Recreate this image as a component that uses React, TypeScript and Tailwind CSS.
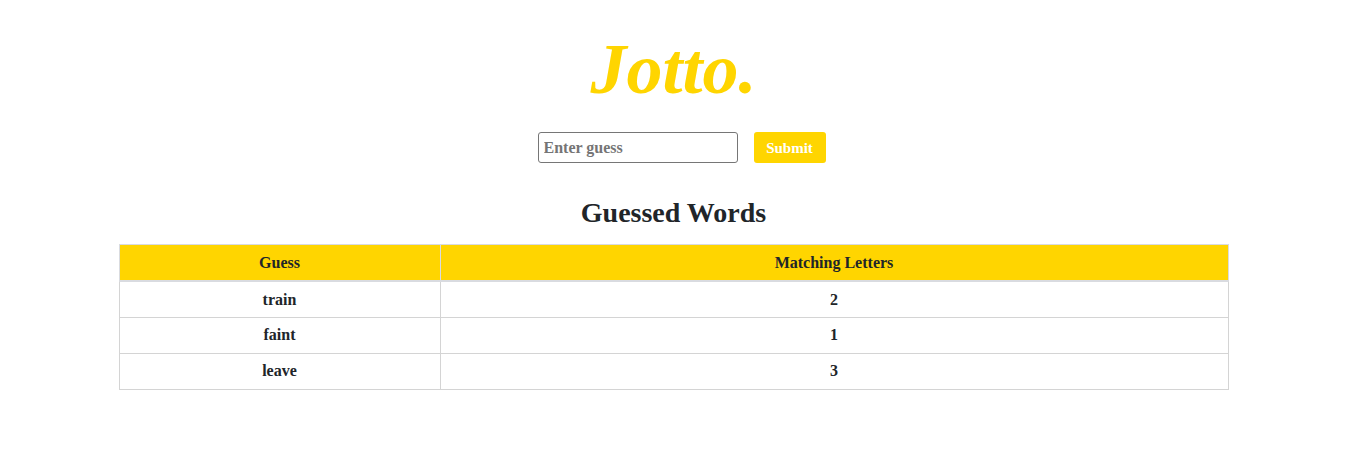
import React from "react";

const rows = [
  { guess: "train", match: 2 },
  { guess: "faint", match: 1 },
  { guess: "leave", match: 3 },
];

export default function App() {
  return (
    <div className="min-h-[452px] bg-white pt-[26px] text-[#212529] font-['Liberation_Serif',serif]">
      <div className="mx-auto w-[1140px] px-[15px]">
        <h1 className="text-center text-[72px] leading-[1.2] font-bold italic text-[#ffd500]">
          Jotto.
        </h1>
        <form
          className="mt-[20px] flex items-center justify-center gap-[16px] pl-[16px]"
          onSubmit={(e) => e.preventDefault()}
        >
          <input
            type="text"
            placeholder="Enter guess"
            className="h-[31px] w-[200px] rounded-[3px] border border-[#767676] px-[5px] text-[16px] font-bold text-[#212529] placeholder:text-[#757575] font-['Liberation_Serif',serif] outline-none"
          />
          <button
            type="submit"
            className="h-[31px] w-[72px] rounded-[3px] bg-[#ffd500] text-[15px] font-bold text-white font-['Liberation_Serif',serif]"
          >
            Submit
          </button>
        </form>
        <h3 className="mt-[33px] text-center text-[28px] leading-[1.2] font-bold text-[#212529]">
          Guessed Words
        </h3>
        <table className="mt-[14px] w-full border-collapse text-center text-[16px] font-bold">
          <thead>
            <tr className="h-[37px] bg-[#ffd500]">
              <th className="w-[321px] border border-b-2 border-[#d9dbe0] font-bold">Guess</th>
              <th className="border border-b-2 border-[#d9dbe0] font-bold">Matching Letters</th>
            </tr>
          </thead>
          <tbody>
            {rows.map((r) => (
              <tr key={r.guess} className="h-[36px]">
                <td className="border border-[#d4d4d4]">{r.guess}</td>
                <td className="border border-[#d4d4d4]">{r.match}</td>
              </tr>
            ))}
          </tbody>
        </table>
      </div>
    </div>
  );
}
